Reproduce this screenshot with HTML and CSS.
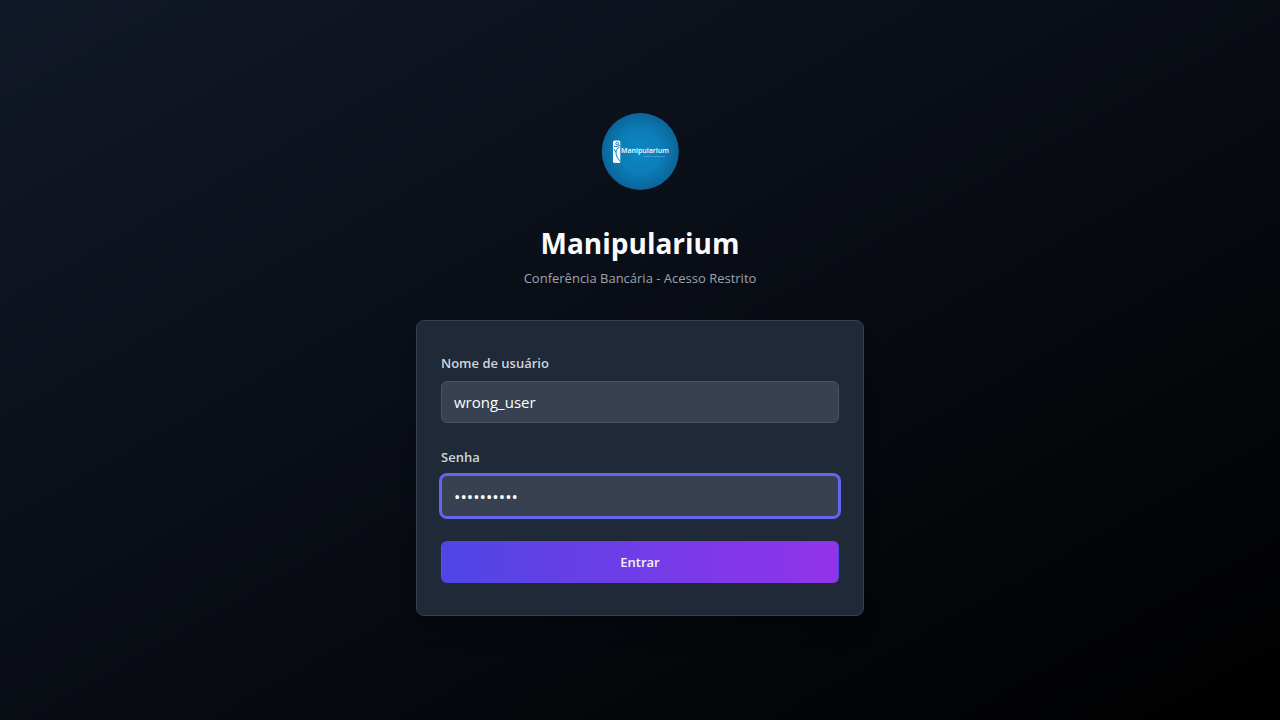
FILE: index.html
```html
<!DOCTYPE html>
<html lang="pt-BR">
<head>
<meta charset="utf-8">
<meta name="viewport" content="width=device-width, initial-scale=1">
<title>Manipularium</title>
<link rel="stylesheet" href="styles.css">
</head>
<body>
<main class="login">
  <header class="brand">
    <svg class="logo" viewBox="0 0 96 96" role="img" aria-label="Manipularium">
      <defs>
        <radialGradient id="disc">
          <stop offset="0" stop-color="#0a88c4"/>
          <stop offset=".55" stop-color="#0b7eb8"/>
          <stop offset="1" stop-color="#0b659a"/>
        </radialGradient>
      </defs>
      <circle cx="48.3" cy="47.5" r="38.5" fill="url(#disc)"/>
      <rect x="21" y="36.5" width="7.3" height="22.5" rx="1.5" fill="#f2fafd"/>
      <g fill="none" stroke="#0a75ad" stroke-width=".9">
        <circle cx="25.2" cy="39.6" r="1.4"/>
        <path d="M22 42.500q3 1 6-1.500M27.500 43q-4 2-3.500 6.500t4 7.500M22 45q1 3 2.500 3"/>
      </g>
      <text class="logo-name" x="29" y="49">Manipularium</text>
      <text class="logo-tagline" x="51" y="53">Farmácia Homeopática</text>
    </svg>
    <h1 class="title">Manipularium</h1>
    <p class="subtitle">Conferência Bancária - Acesso Restrito</p>
  </header>
  <form class="card">
    <div class="field">
      <label class="label" for="username">Nome de usuário</label>
      <input class="input" id="username" type="text" value="wrong_user">
    </div>
    <div class="field">
      <label class="label" for="password">Senha</label>
      <input class="input input-password input-active" id="password" type="password" value="wrong_pass">
    </div>
    <button class="submit" type="submit">Entrar</button>
  </form>
</main>
</body>
</html>
```
FILE: styles.css
```css
* { box-sizing: border-box; }
body {
  margin: 0;
  min-height: 100vh;
  display: flex;
  align-items: center;
  justify-content: center;
  background: linear-gradient(to bottom right, #111827, #000);
  font-family: "Segoe UI", "Open Sans", "Noto Sans", sans-serif;
  color: #f3f4f6;
}
.login {
  width: 100%;
  max-width: 448px;
  display: flex;
  flex-direction: column;
  gap: 32px;
}
.brand {
  display: flex;
  flex-direction: column;
  align-items: center;
  text-align: center;
}
.logo {
  width: 96px;
  height: 96px;
  margin-bottom: 24px;
}
.logo-name { font: 600 7px "Open Sans", sans-serif; fill: #fff; }
.logo-tagline { font: 400 2px "Open Sans", sans-serif; fill: #8fc8e4; }
.title {
  margin: 0 0 6px;
  font-size: 28px;
  line-height: 38px;
  font-weight: 700;
  color: #f9fafb;
}
.subtitle {
  margin: 0;
  font-size: 13px;
  line-height: 20px;
  color: #9ca3af;
}
.card {
  display: flex;
  flex-direction: column;
  gap: 24px;
  padding: 32px 24px;
  background: #1f2937;
  border: 1px solid #374151;
  border-radius: 8px;
  box-shadow: 0 20px 25px -5px rgba(0, 0, 0, .1), 0 8px 10px -6px rgba(0, 0, 0, .1);
}
.field {
  display: flex;
  flex-direction: column;
  gap: 8px;
}
.label {
  font-size: 13px;
  line-height: 20px;
  font-weight: 600;
  color: #d1d5db;
}
.input {
  width: 100%;
  height: 42px;
  padding: 8px 12px;
  border: 1px solid #4b5563;
  border-radius: 6px;
  background: #374151;
  color: #fff;
  font-family: inherit;
  font-size: 15px;
  line-height: 24px;
  outline: none;
}
.input-password { font-size: 17px; }
.input-active,
.input:focus {
  border-color: #6366f1;
  box-shadow: 0 0 0 2px #6366f1;
}
.submit {
  height: 42px;
  padding: 8px 16px;
  border: 1px solid transparent;
  border-radius: 6px;
  background: linear-gradient(to right, #4f46e5, #9333ea);
  color: #f3f4f6;
  font-family: inherit;
  font-size: 13px;
  line-height: 20px;
  font-weight: 600;
  cursor: pointer;
}
```
